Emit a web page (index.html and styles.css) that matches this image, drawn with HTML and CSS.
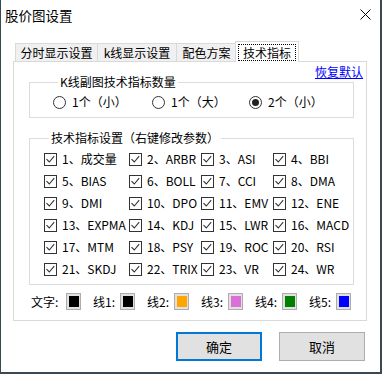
FILE: index.html
```html
<!DOCTYPE html>
<html>
<head>
<meta charset="utf-8">
<link rel="stylesheet" href="styles.css">
</head>
<body>
<svg width="0" height="0" class="defs">
  <symbol id="cb" viewBox="0 0 13 13">
    <rect x="0.5" y="0.5" width="12" height="12" fill="#fff" stroke="#333"/>
    <path d="M2.5 6.2 L5.3 9 L10.2 3.2" fill="none" stroke="#333" stroke-width="1.1"/>
  </symbol>
</svg>
<div class="window">
  <div class="titlebar">
    <span class="title">股价图设置</span>
    <svg class="close" width="11" height="11" viewBox="0 0 11 11"><path d="M0.5 0.5 L10.5 10.5 M10.5 0.5 L0.5 10.5" stroke="#000" stroke-width="1"/></svg>
  </div>
  <div class="tabs">
    <div class="tab t1">分时显示设置</div>
    <div class="tab t2">k线显示设置</div>
    <div class="tab t3">配色方案</div>
    <div class="tab active"><span class="focus">技术指标</span></div>
  </div>
  <div class="panel">
    <div class="link-row"><a class="link">恢复默认</a></div>
    <fieldset class="group g1">
      <legend>K线副图技术指标数量</legend>
      <div class="radios">
        <label class="radio"><span class="rb"></span>1个（小）</label>
        <label class="radio"><span class="rb"></span>1个（大）</label>
        <label class="radio"><span class="rb on"></span>2个（小）</label>
      </div>
    </fieldset>
    <fieldset class="group g2">
      <legend>技术指标设置（右键修改参数）</legend>
      <div class="checks">
        <label class="check"><svg class="box"><use href="#cb"/></svg>1、成交量</label>
        <label class="check"><svg class="box"><use href="#cb"/></svg>2、ARBR</label>
        <label class="check"><svg class="box"><use href="#cb"/></svg>3、ASI</label>
        <label class="check"><svg class="box"><use href="#cb"/></svg>4、BBI</label>
        <label class="check"><svg class="box"><use href="#cb"/></svg>5、BIAS</label>
        <label class="check"><svg class="box"><use href="#cb"/></svg>6、BOLL</label>
        <label class="check"><svg class="box"><use href="#cb"/></svg>7、CCI</label>
        <label class="check"><svg class="box"><use href="#cb"/></svg>8、DMA</label>
        <label class="check"><svg class="box"><use href="#cb"/></svg>9、DMI</label>
        <label class="check"><svg class="box"><use href="#cb"/></svg>10、DPO</label>
        <label class="check"><svg class="box"><use href="#cb"/></svg>11、EMV</label>
        <label class="check"><svg class="box"><use href="#cb"/></svg>12、ENE</label>
        <label class="check"><svg class="box"><use href="#cb"/></svg>13、EXPMA</label>
        <label class="check"><svg class="box"><use href="#cb"/></svg>14、KDJ</label>
        <label class="check"><svg class="box"><use href="#cb"/></svg>15、LWR</label>
        <label class="check"><svg class="box"><use href="#cb"/></svg>16、MACD</label>
        <label class="check"><svg class="box"><use href="#cb"/></svg>17、MTM</label>
        <label class="check"><svg class="box"><use href="#cb"/></svg>18、PSY</label>
        <label class="check"><svg class="box"><use href="#cb"/></svg>19、ROC</label>
        <label class="check"><svg class="box"><use href="#cb"/></svg>20、RSI</label>
        <label class="check"><svg class="box"><use href="#cb"/></svg>21、SKDJ</label>
        <label class="check"><svg class="box"><use href="#cb"/></svg>22、TRIX</label>
        <label class="check"><svg class="box"><use href="#cb"/></svg>23、VR</label>
        <label class="check"><svg class="box"><use href="#cb"/></svg>24、WR</label>
      </div>
    </fieldset>
    <div class="colors">
      <div class="citem"><span class="clabel first">文字:</span><span class="swatch"><span class="fill c-text"></span></span></div>
      <div class="citem"><span class="clabel">线1:</span><span class="swatch"><span class="fill c-l1"></span></span></div>
      <div class="citem"><span class="clabel">线2:</span><span class="swatch"><span class="fill c-l2"></span></span></div>
      <div class="citem"><span class="clabel">线3:</span><span class="swatch"><span class="fill c-l3"></span></span></div>
      <div class="citem"><span class="clabel">线4:</span><span class="swatch"><span class="fill c-l4"></span></span></div>
      <div class="citem"><span class="clabel">线5:</span><span class="swatch"><span class="fill c-l5"></span></span></div>
    </div>
  </div>
  <div class="buttons">
    <button class="btn default">确定</button>
    <button class="btn">取消</button>
  </div>
</div>
</body>
</html>
```

FILE: styles.css
```css
* { box-sizing: border-box; }
html, body { margin: 0; padding: 0; }
body {
  background: #3b4852;
  width: 382px;
  height: 374px;
  overflow: hidden;
  font-family: "Noto Sans CJK SC", "Noto Sans", sans-serif;
  font-size: 12px;
  color: #000;
}
.defs { position: absolute; width: 0; height: 0; }
.window {
  width: 379px;
  height: 372px;
  margin-left: 1px;
  background: #fff;
  display: flex;
  flex-direction: column;
}
.titlebar {
  height: 30px;
  display: flex;
  align-items: center;
  justify-content: space-between;
  padding: 0 9px 0 4px;
}
.title { font-size: 13.5px; line-height: 16px; }
.close { display: block; margin-top: -2px; }

.tabs {
  margin-top: 11px;
  height: 20px;
  display: flex;
  align-items: flex-end;
  padding-left: 14px;
}
.tab {
  height: 18px;
  border: 1px solid #d9d9d9;
  border-bottom: none;
  background: #f0f0f0;
  margin-right: -1px;
  display: flex;
  align-items: center;
  justify-content: center;
  line-height: 14px;
}
.t1 { width: 83px; }
.t2 { width: 80px; }
.t3 { width: 61px; }
.tab.active {
  width: 64px;
  height: 21px;
  margin-left: -1px;
  margin-bottom: -1px;
  background: #fff;
  position: relative;
  z-index: 1;
  padding: 2px 2px 1px 2px;
}
.focus {
  flex: 1;
  align-self: stretch;
  border: 1px dotted #000;
  display: flex;
  align-items: center;
  justify-content: center;
}

.panel {
  margin-left: 12px;
  width: 354px;
  height: 260px;
  border: 1px solid #d9d9d9;
  padding: 3px 0 0 0;
}
.link-row {
  height: 10px;
  display: flex;
  justify-content: flex-end;
  padding-right: 3px;
}
.link {
  color: #0000ff;
  text-decoration: underline;
  line-height: 14px;
  height: 14px;
  position: relative;
}

.group {
  margin: 0 12px 0 15px;
  border: 1px solid #dcdcdc;
  min-width: 0;
}
.group legend {
  margin-left: 5px;
  padding: 0 2px;
  line-height: 14px;
  font-size: 12px;
}
.g1 { padding: 4px 0 6px 23px; }
.g2 { padding: 3px 0 4px 14px; margin-top: 13px; }

.radios {
  display: grid;
  grid-template-columns: 99px 97px auto;
  height: 18px;
}
.radio {
  display: flex;
  align-items: center;
  line-height: 14px;
}
.rb {
  width: 13px;
  height: 13px;
  border: 1px solid #333;
  border-radius: 50%;
  margin-right: 6px;
  display: flex;
  align-items: center;
  justify-content: center;
  background: #fff;
}
.rb.on::before {
  content: "";
  width: 7px;
  height: 7px;
  border-radius: 50%;
  background: #222;
}

.checks {
  display: grid;
  grid-template-columns: 85px 72px 72px auto;
  grid-auto-rows: 22px;
}
.check {
  display: flex;
  align-items: center;
  white-space: nowrap;
  line-height: 14px;
}
.box {
  width: 13px;
  height: 13px;
  margin-right: 5px;
  flex: none;
}

.colors {
  margin: 8px 0 0 17px;
  height: 17px;
  display: flex;
  align-items: center;
  gap: 12px;
}
.citem { display: flex; align-items: center; }
.clabel { width: 27px; line-height: 14px; }
.clabel.first { width: 35px; }
.swatch {
  width: 15px;
  height: 17px;
  border: 1px solid #adadad;
  background: #e1e1e1;
  display: flex;
  align-items: center;
  justify-content: center;
}
.fill { width: 10px; height: 11px; display: block; }
.c-text { background: #000; }
.c-l1 { background: #000; }
.c-l2 { background: #ffa500; }
.c-l3 { background: #da70d6; }
.c-l4 { background: #008000; }
.c-l5 { background: #0000ff; }

.buttons {
  margin-top: 11px;
  display: flex;
  justify-content: flex-end;
  gap: 17px;
  padding-right: 15px;
}
.btn {
  width: 86px;
  height: 29px;
  border: 1px solid #adadad;
  background: #e1e1e1;
  font-family: "Noto Sans CJK SC", sans-serif;
  font-size: 13px;
  color: #000;
  padding: 0;
}
.btn.default { border: 2px solid #0078d7; }
```
